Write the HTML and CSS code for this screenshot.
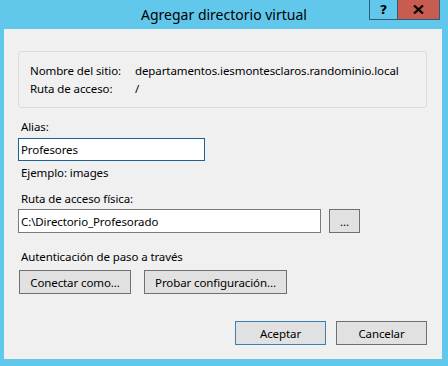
FILE: index.html
```html
<!DOCTYPE html>
<html lang="es">
<head>
  <meta charset="UTF-8">
  <meta name="viewport" content="width=device-width, initial-scale=1.0">
  <title>Agregar directorio virtual</title>
  <link rel="stylesheet" href="styles.css">
</head>
<body>
  <div class="window">
    <div class="titlebar">
      <span></span>
      <div class="title">Agregar directorio virtual</div>
      <div class="caption-buttons">
        <button class="cap help">?</button>
        <button class="cap close">
          <svg width="11" height="9" viewBox="0 0 11 9">
            <path d="M1 0.5 L10 8.5 M10 0.5 L1 8.5" stroke="#000" stroke-width="2.2" fill="none"/>
          </svg>
        </button>
      </div>
    </div>

    <div class="client">
      <div class="groupbox">
        <div class="info-row">
          <span>Nombre del sitio:</span>
          <span>departamentos.iesmontesclaros.randominio.local</span>
        </div>
        <div class="info-row">
          <span>Ruta de acceso:</span>
          <span>/</span>
        </div>
      </div>

      <label class="label first">Alias:</label>
      <input type="text" class="textbox alias" value="Profesores">
      <div class="label hint">Ejemplo: images</div>

      <label class="label path-label">Ruta de acceso física:</label>
      <div class="path-row">
        <input type="text" class="textbox path" value="C:\Directorio_Profesorado">
        <button class="btn browse">...</button>
      </div>

      <div class="label auth-label">Autenticación de paso a través</div>
      <div class="auth-row">
        <button class="btn connect">Conectar como...</button>
        <button class="btn test">Probar configuración...</button>
      </div>

      <div class="footer">
        <button class="btn ok">Aceptar</button>
        <button class="btn cancel">Cancelar</button>
      </div>
    </div>
  </div>
</body>
</html>
```

FILE: styles.css
```css
body {
  margin: 0;
  font-family: "Noto Sans", "Open Sans", sans-serif;
  font-size: 11.5px;
  letter-spacing: -0.1px;
  color: #000;
}
.window {
  width: 448px;
  height: 366px;
  background: #62c8eb;
  display: flex;
  flex-direction: column;
}
.titlebar {
  height: 29px;
  display: grid;
  grid-template-columns: 1fr auto 1fr;
}
.title {
  font-size: 14px;
  letter-spacing: 0;
  line-height: 29px;
  color: #000;
}
.caption-buttons {
  display: flex;
  justify-content: flex-end;
  align-items: flex-start;
  padding-right: 8px;
}
.cap {
  height: 20px;
  border: 1px solid #2f5d78;
  border-top: none;
  padding: 0;
  margin: 0;
  font-family: "DejaVu Sans", sans-serif;
  font-weight: bold;
  font-size: 13px;
  display: flex;
  align-items: center;
  justify-content: center;
}
.help {
  width: 28px;
  background: #62c8eb;
  border-right: none;
}
.close {
  width: 43px;
  background: #c75c50;
}
.client {
  flex: 1;
  margin: 0 6px 7px 4px;
  background: #f0f0f0;
  padding: 22px 15px 0 14px;
  display: flex;
  flex-direction: column;
  align-items: flex-start;
}
.groupbox {
  align-self: stretch;
  height: 57px;
  box-sizing: border-box;
  border: 1px solid #dcdcdc;
  border-radius: 3px;
  padding: 10px 11px 0;
}
.info-row {
  display: grid;
  grid-template-columns: 105px 1fr;
  line-height: 18px;
}
.label {
  line-height: 16px;
  padding-left: 3px;
}
.first {
  margin-top: 11px;
}
.textbox {
  font-family: inherit;
  font-size: 11.5px;
  letter-spacing: -0.1px;
  height: 23px;
  box-sizing: border-box;
  border: 1px solid #7a7a7a;
  background: #fff;
  padding: 0 2px;
  margin: 0;
  outline: none;
}
.alias {
  width: 187px;
  margin-top: 3px;
  border-color: #1f5f91;
}
.hint {
  margin-top: 4px;
}
.path-label {
  margin-top: 10px;
}
.path-row {
  display: flex;
  gap: 8px;
  margin-top: 2px;
}
.path {
  width: 303px;
  height: 24px;
}
.btn {
  font-family: inherit;
  font-size: 11.5px;
  letter-spacing: -0.1px;
  height: 24px;
  box-sizing: border-box;
  border: 1px solid #707070;
  background: #e1e1e1;
  padding: 0;
  margin: 0;
  color: #000;
}
.browse {
  width: 31px;
}
.auth-label {
  margin-top: 16px;
}
.auth-row {
  display: flex;
  gap: 13px;
  margin-top: 5px;
  padding-left: 1px;
}
.connect {
  width: 112px;
}
.test {
  width: 143px;
}
.footer {
  align-self: stretch;
  display: flex;
  justify-content: flex-end;
  gap: 10px;
  margin-top: 27px;
}
.ok,
.cancel {
  width: 91px;
}
.ok {
  border-color: #3c7fb1;
}
```
